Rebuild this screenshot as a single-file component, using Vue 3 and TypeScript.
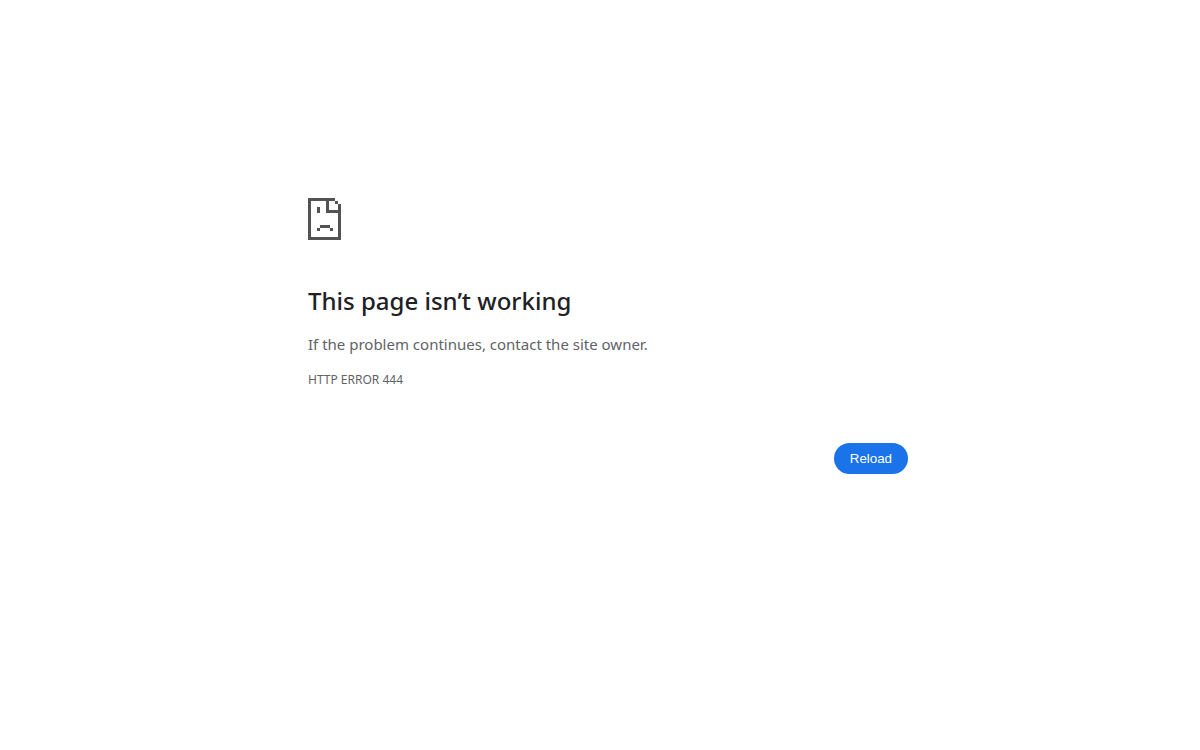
<script setup lang="ts">
const title: string = 'This page isn’t working'
const summary: string = 'If the problem continues, contact the site owner.'
const errorCode: string = 'HTTP ERROR 444'

function reload(): void {
  window.location.reload()
}
</script>

<template>
  <main class="page">
    <div class="wrapper">
      <svg class="icon" viewBox="0 0 33 42" aria-hidden="true" shape-rendering="crispEdges">
        <path
          d="M0 0H27V3H21V12H33V42H0ZM3 3V39H30V15H18V3ZM27 3H30V6H27ZM30 6H33V12H30ZM9 9H12V15H9ZM12 27H22V30H12ZM9 30H12V33H9ZM22 30H25V33H22Z"
          fill-rule="evenodd"
        />
      </svg>
      <h1>{{ title }}</h1>
      <p class="summary">{{ summary }}</p>
      <p class="code">{{ errorCode }}</p>
      <div class="actions">
        <button type="button" @click="reload">Reload</button>
      </div>
    </div>
  </main>
</template>

<style>
body {
  margin: 0;
  background: #fff;
}
</style>

<style scoped>
.page {
  padding: 198px 0 40px 16px;
  font-family: "Noto Sans", sans-serif;
  color: #5f6368;
}
.wrapper {
  max-width: 600px;
  margin: 0 auto;
}
.icon {
  display: block;
  width: 33px;
  height: 42px;
  fill: #535353;
}
h1 {
  margin: 46px 0 16px;
  font-size: 24px;
  font-weight: 500;
  line-height: 30px;
  color: #202124;
}
p {
  margin: 0;
}
.summary {
  font-size: 15px;
  line-height: 24px;
}
.code {
  margin-top: 14px;
  font-size: 12px;
  line-height: 20px;
}
.actions {
  display: flex;
  justify-content: flex-end;
  margin-top: 53px;
}
button {
  padding: 8px 16px;
  border: 0;
  border-radius: 20px;
  background: #1a73e8;
  color: #fff;
  font-family: "Liberation Sans", Arial, sans-serif;
  line-height: 15px;
  cursor: pointer;
}
</style>
